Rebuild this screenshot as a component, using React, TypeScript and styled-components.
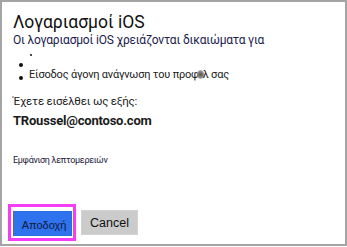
import React from "react";
import styled, { createGlobalStyle } from "styled-components";

const Global = createGlobalStyle`
  html, body { margin: 0; padding: 0; background: #fff; }
  body { font-family: Roboto, "Noto Sans", sans-serif; }
`;

const Frame = styled.div`
  box-sizing: border-box;
  width: 347px;
  height: 246px;
  border: 2px solid #a4a4a4;
  background: #fff;
  padding: 9px 0 0 11px;
  display: flex;
  flex-direction: column;
`;

const Title = styled.h1`
  margin: 0;
  font-size: 17.5px;
  line-height: 22px;
  font-weight: 400;
  color: #111;
`;

const Subtitle = styled.p`
  margin: 0;
  font-size: 12px;
  line-height: 15px;
  color: #1c1c4c;
  letter-spacing: -0.2px;
`;

const List = styled.div`
  display: flex;
  flex-direction: column;
  height: 38px;
`;

const Row = styled.div<{ $indent: number; $h: number }>`
  display: flex;
  align-items: flex-end;
  height: ${(p) => p.$h}px;
  padding-left: ${(p) => p.$indent}px;
`;

const Dot = styled.span<{ $size: number; $lift: number }>`
  width: ${(p) => p.$size}px;
  height: ${(p) => p.$size}px;
  border-radius: 50%;
  background: #111;
  margin-bottom: ${(p) => p.$lift}px;
  flex: none;
`;

const ItemText = styled.span`
  font-size: 11px;
  line-height: 13px;
  color: #222;
  letter-spacing: -0.2px;
  margin-left: 6px;
`;

const Blur = styled.span`
  display: inline-block;
  width: 7px;
  height: 9px;
  border-radius: 50%;
  background: radial-gradient(circle, #555 0%, #888 50%, rgba(200,200,200,0.3) 100%);
  vertical-align: -1px;
  margin: 0 -1px 0 -2px;
`;

const Signed = styled.p`
  margin: 8px 0 0;
  font-size: 11.5px;
  line-height: 15px;
  color: #222;
  letter-spacing: -0.2px;
`;

const Email = styled.p`
  margin: 3px 0 0;
  font-size: 13px;
  line-height: 17px;
  font-weight: 700;
  color: #1a1a1a;
  letter-spacing: -0.2px;
`;

const Details = styled.p`
  margin: 25px 0 0;
  font-size: 9px;
  line-height: 12px;
  color: #1a1a3a;
  letter-spacing: -0.3px;
`;

const Actions = styled.div`
  margin-top: auto;
  margin-bottom: 3px;
  margin-left: -5px;
  display: flex;
  align-items: flex-start;
  gap: 5px;
`;

const Highlight = styled.div`
  border: 3px solid #f53df5;
  padding: 4px 1px 2px 2px;
  width: 59px;
  height: 25px;
  box-sizing: content-box;
`;

const Button = styled.button<{ $primary?: boolean }>`
  box-sizing: border-box;
  font-family: "Liberation Sans", Arial, sans-serif;
  width: ${(p) => (p.$primary ? 59 : 57)}px;
  height: 25px;
  border: 1px solid ${(p) => (p.$primary ? "#2a6de0" : "#d2d2d2")};
  background: ${(p) => (p.$primary ? "#2e72ee" : "#cbcbcb")};
  color: ${(p) => (p.$primary ? "#0e1a3a" : "#111")};
  font-size: ${(p) => (p.$primary ? 11 : 12.5)}px;
  padding: ${(p) => (p.$primary ? "3px 0 0 3px" : "0")};
  margin-top: ${(p) => (p.$primary ? 0 : 6)}px;
  cursor: pointer;
`;

export default function App() {
  return (
    <>
      <Global />
      <Frame>
        <Title>Λογαριασμοί iOS</Title>
        <Subtitle>Οι λογαριασμοί iOS χρειάζονται δικαιώματα για</Subtitle>
        <List>
          <Row $indent={17} $h={9}>
            <Dot $size={2} $lift={1} />
          </Row>
          <Row $indent={6} $h={10}>
            <Dot $size={4} $lift={0} />
          </Row>
          <Row $indent={6} $h={14}>
            <Dot $size={4} $lift={1} />
            <ItemText>
              Είσοδος άγονη ανάγνωση του προφ<Blur />λ σας
            </ItemText>
          </Row>
        </List>
        <Signed>Έχετε εισέλθει ως εξής:</Signed>
        <Email>TRoussel@contoso.com</Email>
        <Details>Εμφάνιση λεπτομερειών</Details>
        <Actions>
          <Highlight>
            <Button $primary>Αποδοχή</Button>
          </Highlight>
          <Button>Cancel</Button>
        </Actions>
      </Frame>
    </>
  );
}
